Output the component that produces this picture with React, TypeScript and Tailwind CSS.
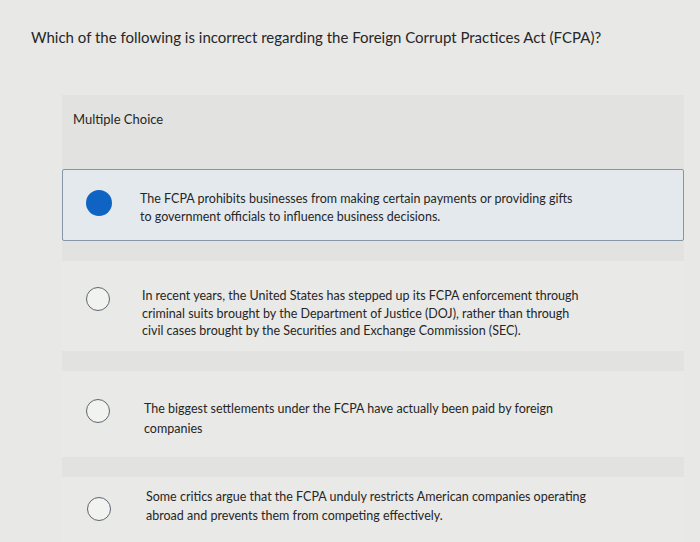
import React from "react";

const options = [
  {
    text: "The FCPA prohibits businesses from making certain payments or providing gifts to government officials to influence business decisions.",
    selected: true,
  },
  {
    text: "In recent years, the United States has stepped up its FCPA enforcement through criminal suits brought by the Department of Justice (DOJ), rather than through civil cases brought by the Securities and Exchange Commission (SEC).",
    selected: false,
  },
  {
    text: "The biggest settlements under the FCPA have actually been paid by foreign companies",
    selected: false,
  },
  {
    text: "Some critics argue that the FCPA unduly restricts American companies operating abroad and prevents them from competing effectively.",
    selected: false,
  },
];

const Radio = ({ selected }: { selected: boolean }) =>
  selected ? (
    <div className="w-[26px] h-[26px] rounded-full bg-[#0f63c2] shrink-0" />
  ) : (
    <div className="w-[24px] h-[24px] rounded-full border-[1.5px] border-[#5c6670] bg-[#f2f2f0] shrink-0" />
  );

export default function App() {
  return (
    <div
      className="w-[700px] h-[542px] overflow-hidden bg-[#e8e8e6] text-[#262626]"
      style={{ fontFamily: "Lato, 'Liberation Sans', Arial, sans-serif" }}
    >
      <div className="pt-[28px] pl-[31px] text-[15px] leading-[18px]">
        Which of the following is incorrect regarding the Foreign Corrupt Practices Act (FCPA)?
      </div>

      <div className="mt-[49px] ml-[62px] w-[622px] h-[480px] bg-[#e2e2e0]">
        <div className="pt-[16px] pl-[11px] text-[13px] leading-[16px]">Multiple Choice</div>

        <div className="mt-[42px] flex flex-col gap-[20px]">
          {/* selected answer */}
          <div className="h-[72px] border border-[#8796a4] bg-[#e4e9ee] rounded-[2px] flex items-start pt-[20px]">
            <div className="pl-[23px] w-[77px]">
              <Radio selected />
            </div>
            <p className="w-[440px] text-[12.5px] leading-[18px]">{options[0].text}</p>
          </div>

          <div className="h-[90px] bg-[#e9e9e7] flex items-start pt-[26px]">
            <div className="pl-[24px] w-[80px]">
              <Radio selected={false} />
            </div>
            <p className="w-[450px] text-[12.5px] leading-[17.5px]">{options[1].text}</p>
          </div>

          <div className="h-[86px] bg-[#e9e9e7] flex items-start pt-[28px]">
            <div className="pl-[24px] w-[82px]">
              <Radio selected={false} />
            </div>
            <p className="w-[430px] text-[12.5px] leading-[20px]">{options[2].text}</p>
          </div>

          <div className="h-[80px] bg-[#e9e9e7] flex items-start pt-[10px]">
            <div className="pl-[25px] w-[84px] pt-[10px]">
              <Radio selected={false} />
            </div>
            <p className="w-[450px] text-[12.5px] leading-[19px]">{options[3].text}</p>
          </div>
        </div>
      </div>
    </div>
  );
}
